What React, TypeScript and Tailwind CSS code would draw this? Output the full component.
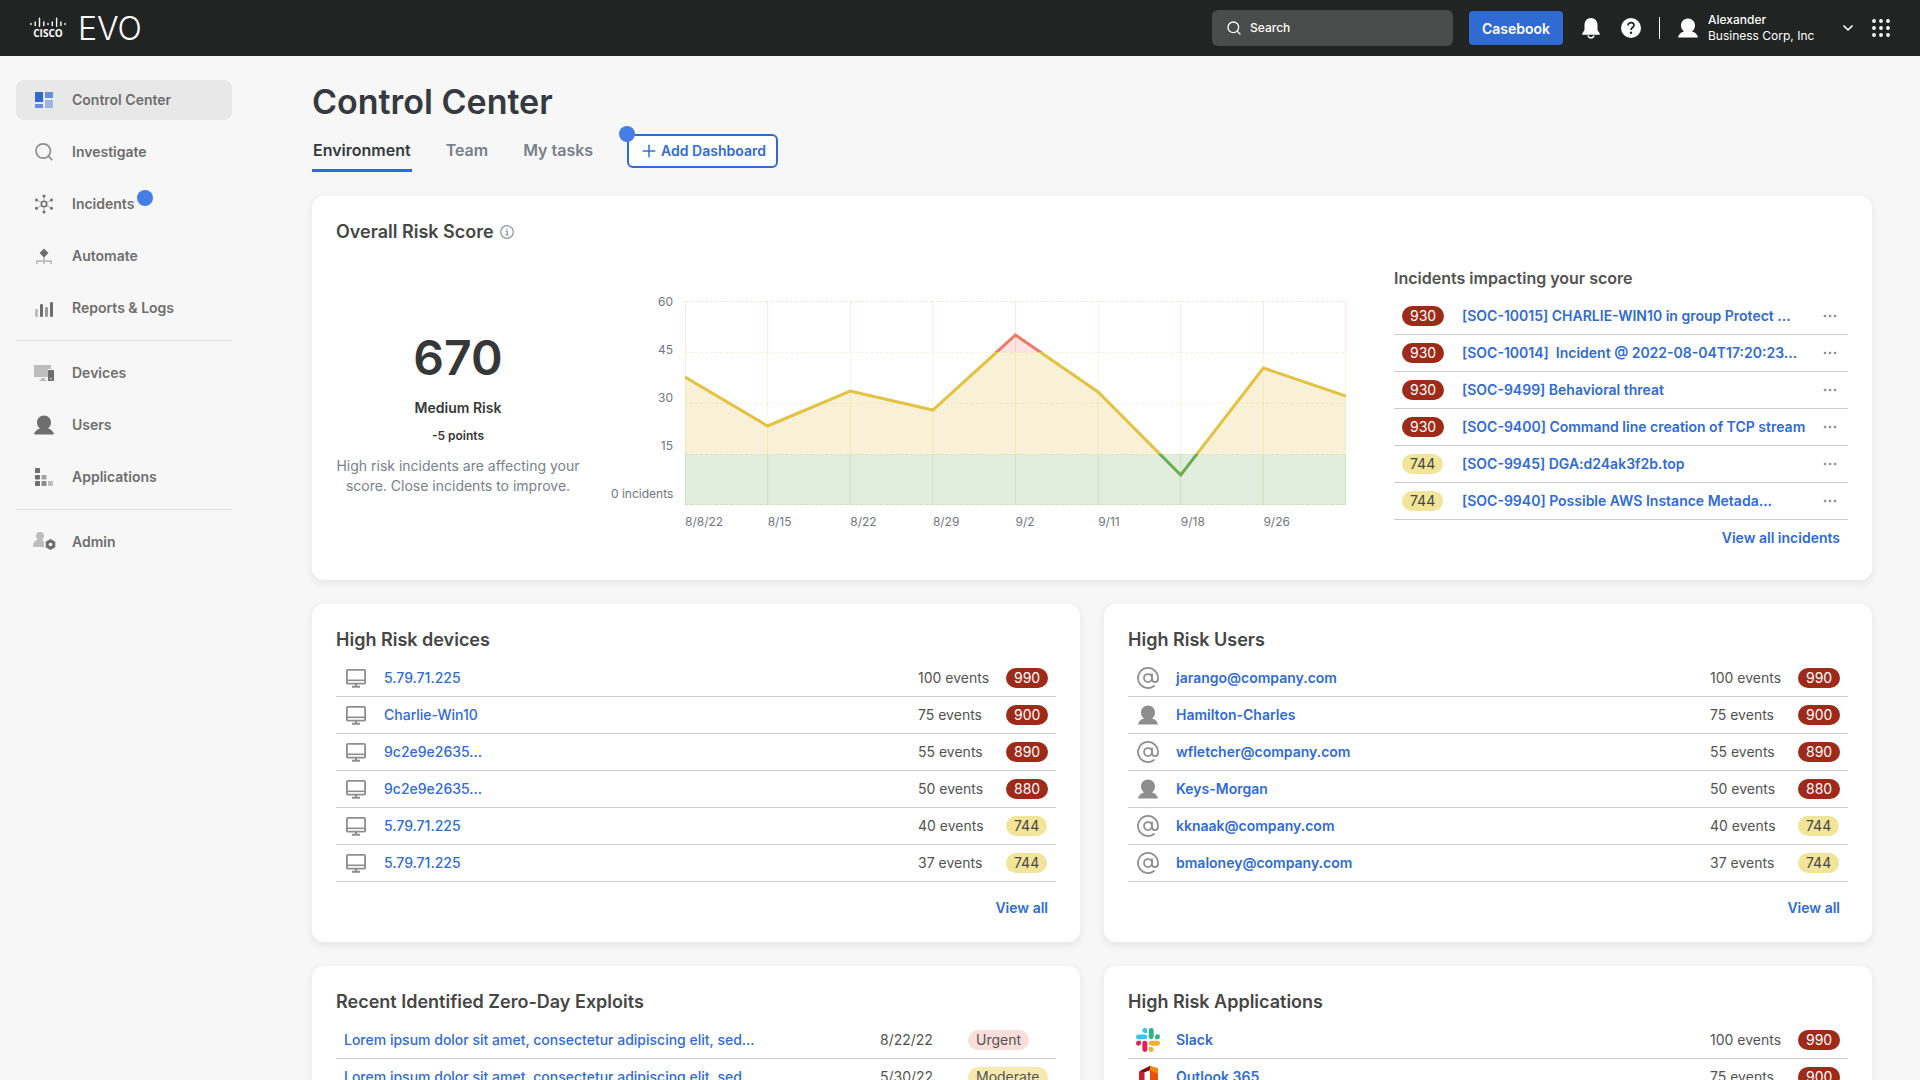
import type { ReactNode } from "react";
import { AtSign, ChevronDown, Plus, Search } from "lucide-react";

/* ---------- Icons ---------- */

const PersonIcon = ({ className }: { className?: string }) => (
  <svg className={className} viewBox="0 0 24 24" fill="currentColor" aria-hidden="true">
    <path d="M12 2.5c-4 0-7 3-7 7 0 2.600 1.200 4.600 3 6-3.200.8-5.600 3-6 6h20c-.4-3-2.800-5.200-6-6 1.800-1.400 3-3.400 3-6 0-4-3-7-7-7z" />
  </svg>
);

const MonitorIcon = () => (
  <svg className="size-6 text-[#8e8e8e]" viewBox="0 0 24 24" fill="none" stroke="currentColor" aria-hidden="true">
    <rect x="2.9" y="3.9" width="18.200" height="13.800" rx="1" strokeWidth="1.800" />
    <path d="M3 14.300h18" strokeWidth="1.600" />
    <path d="M12 18v3M8 20.800h8" strokeWidth="2" />
  </svg>
);

const SlackIcon = () => (
  <svg className="size-6" viewBox="0 0 24 24" aria-hidden="true">
    <g fill="#36c5f0">
      <path d="M8.800 0a2.400 2.400 0 0 0 0 4.900h2.400V2.400A2.400 2.400 0 0 0 8.800 0z" />
      <rect x="0" y="6.400" width="11.200" height="4.900" rx="2.400" />
    </g>
    <g fill="#2eb67d">
      <rect x="12.800" y="0" width="4.900" height="11.200" rx="2.400" />
      <path d="M24 8.800a2.400 2.400 0 0 0-4.900 0v2.400h2.500A2.400 2.400 0 0 0 24 8.800z" />
    </g>
    <g fill="#ecb22e">
      <rect x="12.800" y="12.800" width="11.200" height="4.900" rx="2.400" />
      <path d="M15.200 24a2.400 2.400 0 0 0 0-4.900h-2.400v2.500A2.400 2.400 0 0 0 15.200 24z" />
    </g>
    <g fill="#e01e5a">
      <path d="M0 15.200a2.400 2.400 0 0 0 4.900 0v-2.400H2.400A2.400 2.400 0 0 0 0 15.200z" />
      <rect x="6.400" y="12.800" width="4.900" height="11.200" rx="2.400" />
    </g>
  </svg>
);

const OfficeIcon = () => (
  <svg className="size-6" viewBox="0 0 24 24" aria-hidden="true">
    <path d="M14 1l8 2.500v17L14 23z" fill="#e8500e" />
    <path d="M14 1l8 2.500V9l-8-4z" fill="#f08a00" />
    <path d="M14 1v4L8.500 7v9L3 18.500V6.500z" fill="#c4202f" />
    <path d="M14 1v4.200L8 7.300 4 6z" fill="#7c0d10" />
    <path d="M3 18.500l11 1V23z" fill="#d63a2b" />
  </svg>
);

const AtIcon = () => <AtSign className="size-6 text-[#8e8e8e]" strokeWidth={1.75} />;
const UserRowIcon = () => <PersonIcon className="size-6 text-[#8e8e8e]" />;

const DashboardIcon = () => (
  <svg className="size-6" viewBox="0 0 24 24" fill="#2f6bd3" aria-hidden="true">
    <rect x="3" y="4" width="8" height="10" rx=".5" />
    <rect x="13" y="4" width="8" height="6" rx=".5" opacity=".7" />
    <rect x="3" y="16" width="8" height="4" rx=".5" opacity=".7" />
    <rect x="13" y="12" width="8" height="8" rx=".5" opacity=".4" />
  </svg>
);

const InvestigateIcon = () => (
  <svg className="size-6" viewBox="0 0 24 24" fill="none" stroke="#8e8e8e" strokeWidth="1.700" aria-hidden="true">
    <circle cx="11.200" cy="11" r="7.200" />
    <path d="M16.300 16.200l4 4" />
  </svg>
);

const IncidentsIcon = () => (
  <svg className="size-6" viewBox="0 0 24 24" aria-hidden="true">
    <path d="M12 4v5M12 15v5M4.500 8l5 2.500M19.500 8l-5 2.500M4.500 16l5-2.500M19.500 16l-5-2.500" stroke="#b8b8b8" strokeWidth="1.200" />
    <circle cx="12" cy="12" r="2.700" fill="none" stroke="#6e6e6e" strokeWidth="1.600" />
    <g fill="#6e6e6e">
      <circle cx="12" cy="4" r="1.500" />
      <circle cx="12" cy="20" r="1.500" />
      <circle cx="4.500" cy="8" r="1.500" />
      <circle cx="19.500" cy="8" r="1.500" />
      <circle cx="4.500" cy="16.300" r="1.500" />
      <circle cx="19.500" cy="16.300" r="1.500" />
    </g>
  </svg>
);

const AutomateIcon = () => (
  <svg className="size-6" viewBox="0 0 24 24" aria-hidden="true">
    <path d="M4.800 20v-2.800h14.400V20M12 12v8" fill="none" stroke="#bdbdbd" strokeWidth="1.700" />
    <rect x="8.800" y="5.800" width="6.400" height="6.400" rx=".8" transform="rotate(45 12 9)" fill="#6e6e6e" />
  </svg>
);

const ReportsIcon = () => (
  <svg className="size-6" viewBox="0 0 24 24" aria-hidden="true">
    <rect x="3" y="13" width="3" height="8" rx="1.200" fill="#bdbdbd" />
    <rect x="8" y="8" width="3" height="13" rx="1.200" fill="#6e6e6e" />
    <rect x="13" y="11" width="3" height="10" rx="1.200" fill="#9a9a9a" />
    <rect x="18" y="6" width="3" height="15" rx="1.200" fill="#6e6e6e" />
  </svg>
);

const DevicesIcon = () => (
  <svg className="size-6" viewBox="0 0 24 24" aria-hidden="true">
    <path d="M2 4h17v4h-3v8H2zM9 17h4v2h1.500v1h-7v-1H9z" fill="#bdbdbd" />
    <rect x="16" y="9" width="6" height="11" rx=".8" fill="#6e6e6e" />
    <circle cx="19" cy="17.700" r=".8" fill="#fff" />
  </svg>
);

const ApplicationsIcon = () => (
  <svg className="size-6" viewBox="0 0 24 24" aria-hidden="true">
    <g fill="#6e6e6e">
      <rect x="3" y="3" width="5" height="5" rx=".8" />
      <rect x="3" y="10" width="5" height="4.500" rx=".8" />
      <rect x="3" y="16" width="5" height="5" rx=".8" />
    </g>
    <rect x="9.500" y="10" width="5" height="4.500" rx=".8" fill="#a2a2a2" />
    <rect x="9.500" y="16" width="5" height="5" rx=".8" fill="#8c8c8c" />
    <rect x="16" y="16" width="5" height="5" rx=".8" fill="#bdbdbd" />
  </svg>
);

const AdminIcon = () => (
  <svg className="size-6 overflow-visible" viewBox="0 0 24 24" aria-hidden="true">
    <path d="M8 2a4 4 0 0 0-4 4c0 1.500.7 2.800 1.800 3.500C3 10.300 1 12.500 1 17h11v-5l-1.800-2.500C11.300 8.800 12 7.500 12 6a4 4 0 0 0-4-4z" fill="#bdbdbd" />
    <path d="M18.500 9l4.800 2.700v5.600L18.500 20l-4.800-2.700v-5.600z" fill="#6e6e6e" />
    <circle cx="18.500" cy="14.500" r="1.800" fill="#f7f7f7" />
  </svg>
);

/* ---------- Data ---------- */

const navGroups = [
  [
    { label: "Control Center", icon: <DashboardIcon />, active: true },
    { label: "Investigate", icon: <InvestigateIcon /> },
    { label: "Incidents", icon: <IncidentsIcon />, dot: true },
    { label: "Automate", icon: <AutomateIcon /> },
    { label: "Reports & Logs", icon: <ReportsIcon /> },
  ],
  [
    { label: "Devices", icon: <DevicesIcon /> },
    { label: "Users", icon: <PersonIcon className="size-6 text-[#6e6e6e]" /> },
    { label: "Applications", icon: <ApplicationsIcon /> },
  ],
  [{ label: "Admin", icon: <AdminIcon /> }],
];

const incidents = [
  { score: 930, name: "[SOC-10015] CHARLIE-WIN10 in group Protect ..." },
  { score: 930, name: "[SOC-10014]  Incident @ 2022-08-04T17:20:23..." },
  { score: 930, name: "[SOC-9499] Behavioral threat" },
  { score: 930, name: "[SOC-9400] Command line creation of TCP stream" },
  { score: 744, name: "[SOC-9945] DGA:d24ak3f2b.top" },
  { score: 744, name: "[SOC-9940] Possible AWS Instance Metada..." },
];

type RiskRow = { icon: ReactNode; name: string; events: number; score: number };

const devices: RiskRow[] = [
  { icon: <MonitorIcon />, name: "5.79.71.225", events: 100, score: 990 },
  { icon: <MonitorIcon />, name: "Charlie-Win10", events: 75, score: 900 },
  { icon: <MonitorIcon />, name: "9c2e9e2635...", events: 55, score: 890 },
  { icon: <MonitorIcon />, name: "9c2e9e2635...", events: 50, score: 880 },
  { icon: <MonitorIcon />, name: "5.79.71.225", events: 40, score: 744 },
  { icon: <MonitorIcon />, name: "5.79.71.225", events: 37, score: 744 },
];

const users: RiskRow[] = [
  { icon: <AtIcon />, name: "jarango@company.com", events: 100, score: 990 },
  { icon: <UserRowIcon />, name: "Hamilton-Charles", events: 75, score: 900 },
  { icon: <AtIcon />, name: "wfletcher@company.com", events: 55, score: 890 },
  { icon: <UserRowIcon />, name: "Keys-Morgan", events: 50, score: 880 },
  { icon: <AtIcon />, name: "kknaak@company.com", events: 40, score: 744 },
  { icon: <AtIcon />, name: "bmaloney@company.com", events: 37, score: 744 },
];

const applications: RiskRow[] = [
  { icon: <SlackIcon />, name: "Slack", events: 100, score: 990 },
  { icon: <OfficeIcon />, name: "Outlook 365", events: 75, score: 900 },
];

const exploits = [
  { name: "Lorem ipsum dolor sit amet, consectetur adipiscing elit, sed...", date: "8/22/22", level: "Urgent", color: "bg-[#fadedc]" },
  { name: "Lorem ipsum dolor sit amet, consectetur adipiscing elit, sed", date: "5/30/22", level: "Moderate", color: "bg-[#f6eab0]" },
];

/* ---------- Shared pieces ---------- */

function Card({ title, children }: { title: ReactNode; children: ReactNode }) {
  return (
    <section className="rounded-xl bg-white p-6 shadow-[0_3px_10px_rgba(0,0,0,0.08)]">
      <h2 className="flex items-center gap-1.5 text-[18px] leading-6 font-semibold text-[#464646]">{title}</h2>
      {children}
    </section>
  );
}

const tableClass = "mt-2 w-full table-fixed border-separate border-spacing-0 text-[14px] leading-5 text-[#525252]";
const rowClass = "h-[37px] [&>td]:border-b [&>td]:border-[#c9cbd1]";

function Score({ value }: { value: number }) {
  return (
    <span
      className={`block w-fit rounded-full px-2 ${
        value > 800 ? "bg-[#9e2a1a] text-white" : "bg-[#f2e498] text-[#464646]"
      }`}
    >
      {value}
    </span>
  );
}

function RiskTable({ rows, linkClass }: { rows: RiskRow[]; linkClass: string }) {
  return (
    <table className={tableClass}>
      <colgroup>
        <col className="w-10" />
        <col />
        <col className="w-22" />
        <col className="w-[58px]" />
      </colgroup>
      <tbody>
        {rows.map((row, i) => (
          <tr key={i} className={rowClass}>
            <td className="pl-2">{row.icon}</td>
            <td className="pl-2">
              <a href="#" className={linkClass}>
                {row.name}
              </a>
            </td>
            <td className="pl-2 whitespace-nowrap">{row.events} events</td>
            <td className="pl-2">
              <Score value={row.score} />
            </td>
          </tr>
        ))}
      </tbody>
    </table>
  );
}

function ViewAll() {
  return (
    <div className="mt-4 pr-2 text-right text-[14px] leading-5 font-semibold">
      <a href="#" className="text-[#2f6bd3]">
        View all
      </a>
    </div>
  );
}

/* ---------- Risk chart ---------- */

const xLabels = ["8/8/22", "8/15", "8/22", "8/29", "9/2", "9/11", "9/18", "9/26"];
const yLabels = ["60", "45", "30", "15", "0 incidents"];
const points = "0,76 82.5,125 165,90 247.5,109 330,34 412.5,91 495,174 577.5,67 660,95";

// The three risk bands, top to bottom
const bands = [
  { id: "high", y: 0, h: 51, line: "#e97b6c", fill: "#fbe3e1" },
  { id: "medium", y: 51, h: 102, line: "#e2c241", fill: "#f8f1d8" },
  { id: "low", y: 153, h: 51, line: "#6aae4f", fill: "#e1eedd" },
];

function RiskChart() {
  return (
    <div className="ml-[31px] flex min-w-0 flex-1 gap-3 text-[12px] leading-4 text-[#6f7580]">
      <div className="flex w-[62px] flex-col gap-8 pt-7 text-right whitespace-nowrap">
        {yLabels.map((label) => (
          <span key={label}>{label}</span>
        ))}
      </div>
      <div className="min-w-0 flex-1 pt-[35px]">
        <svg className="h-51 w-full" viewBox="0 0 660 204" preserveAspectRatio="none" role="img" aria-label="Risk score over time">
          {bands.map((band) => (
            <g key={band.id}>
              <clipPath id={band.id}>
                <rect x="0" y={band.y} width="660" height={band.h} />
              </clipPath>
              <g clipPath={`url(#${band.id})`}>
                {band.id === "low" ? (
                  <rect x="0" y={band.y} width="660" height={band.h} fill={band.fill} />
                ) : (
                  <polygon points={`0,204 ${points} 660,204`} fill={band.fill} />
                )}
                {[0.5, 82.5, 165, 247.5, 330, 412.5, 495, 577.5, 659.5].map((x) => (
                  <path key={x} d={`M${x} 0V204`} stroke={band.line} strokeOpacity=".18" />
                ))}
              </g>
            </g>
          ))}
          <g strokeOpacity=".2" strokeDasharray="3 2">
            <path d="M0 .5H660" stroke="#e97b6c" />
            <path d="M0 51.500H660M0 102.500H660M0 153.500H660" stroke="#e2c241" />
            <path d="M0 203.500H660" stroke="#6aae4f" />
          </g>
          {bands.map((band) => (
            <polyline
              key={band.id}
              points={points}
              fill="none"
              stroke={band.line}
              strokeWidth="3"
              clipPath={`url(#${band.id})`}
            />
          ))}
        </svg>
        <div className="mt-[9px] grid grid-cols-8">
          {xLabels.map((label) => (
            <span key={label}>{label}</span>
          ))}
        </div>
      </div>
    </div>
  );
}

/* ---------- Page sections ---------- */

function Header() {
  return (
    <header className="flex h-14 shrink-0 items-center bg-[#222423] px-7.5 text-white">
      <div className="flex w-9 flex-col items-center">
        <svg className="h-2.5 w-9" viewBox="0 0 36 10" stroke="#fff" strokeWidth="1.400" strokeLinecap="round" aria-hidden="true">
          <path d="M.9 6.500v1M5.200 5v3.500M9.500 1.200v8M13.800 5v3.500M18 6.500v1M22.300 5v3.500M26.600 1.200v8M30.900 5v3.500M35.100 6.500v1" />
        </svg>
        <span className="font-['Open_Sans',sans-serif] text-[10px] leading-3 font-bold">CISCO</span>
      </div>
      <span className="ml-3 pt-0.5 text-[32px] leading-10 font-light">EVO</span>

      <label className="ml-auto flex h-9 w-[241px] items-center gap-2 rounded-md bg-[#4a4c4b] px-3.5">
        <Search className="size-4" strokeWidth={2} />
        <input
          type="text"
          aria-label="Search"
          placeholder="Search"
          className="min-w-0 flex-1 bg-transparent text-[12px] font-medium placeholder:text-white focus:outline-none"
        />
      </label>
      <button type="button" className="ml-4 h-[34px] w-[94px] rounded bg-[#2f6bd3] text-[14px] font-semibold">
        Casebook
      </button>
      <button type="button" aria-label="Notifications" className="ml-4">
        <svg className="size-6" viewBox="0 0 24 24" fill="#fff" aria-hidden="true">
          <path d="M12 2c-4 0-6.500 3-6.500 7v5L3.300 17.500c-.3.700 0 1.300.7 1.300h16c.7 0 1-.6.700-1.300L18.500 14V9c0-4-2.500-7-6.500-7z" />
          <path d="M9 19.500c.3 1.500 1.500 2.300 3 2.300s2.700-.8 3-2.300" fill="none" stroke="#fff" strokeWidth="1.300" />
        </svg>
      </button>
      <button type="button" aria-label="Help" className="ml-4">
        <svg className="size-6" viewBox="0 0 24 24" aria-hidden="true">
          <circle cx="12" cy="12" r="10" fill="#fff" />
          <path d="M9 9.500C9 7.700 10.300 6.600 12 6.600s3 1.100 3 2.700c0 2.200-3 2.300-3 4.700" fill="none" stroke="#222423" strokeWidth="1.700" />
          <circle cx="12" cy="16.800" r="1.200" fill="#222423" />
        </svg>
      </button>
      <div className="ml-4 h-[22px] w-px bg-white" />
      <button type="button" className="ml-4 flex items-center text-left text-[12px] leading-4">
        <PersonIcon className="size-6" />
        <span className="ml-2 w-32">
          <span className="block font-medium">Alexander</span>
          <span className="block">Business Corp, Inc</span>
        </span>
        <ChevronDown className="ml-1 size-4" strokeWidth={2.5} />
      </button>
      <button type="button" aria-label="Apps" className="ml-4">
        <svg className="size-[18px]" viewBox="0 0 18 18" fill="#fff" aria-hidden="true">
          {[2, 9, 16].map((y) => [2, 9, 16].map((x) => <circle key={`${x}-${y}`} cx={x} cy={y} r="1.900" />))}
        </svg>
      </button>
    </header>
  );
}

function Sidebar() {
  return (
    <nav className="flex w-58 shrink-0 flex-col gap-3 py-6 pl-4 text-[14px] leading-5 font-semibold text-[#6e6e6e]">
      {navGroups.map((group, g) => (
        <div key={g} className="contents">
          {g > 0 && <hr className="border-[#dedede]" />}
          {group.map((item) => (
            <a
              key={item.label}
              href="#"
              className={`flex h-10 items-center gap-4 rounded-lg px-4 ${item.active ? "bg-[#e8e8e8]" : ""}`}
            >
              {item.icon}
              <span className="relative">
                {item.label}
                {item.dot && <span className="absolute -top-1 left-full ml-[3px] size-4 rounded-full bg-[#457fe6]" />}
              </span>
            </a>
          ))}
        </div>
      ))}
    </nav>
  );
}

function Tabs() {
  return (
    <div className="mt-2.5 mb-6 flex items-end gap-[33px] text-[16px] leading-6 font-semibold">
      <button type="button" className="border-b-3 border-[#2f6bd3] px-px pb-[7px] text-[#343a40]">
        Environment
      </button>
      <button type="button" className="border-b-3 border-transparent px-px pb-[7px] text-[#78808a]">
        Team
      </button>
      <button type="button" className="border-b-3 border-transparent px-px pb-[7px] text-[#78808a]">
        My tasks
      </button>
      <button
        type="button"
        className="relative mb-1 flex h-[34px] items-center gap-0.5 rounded-md border-2 border-[#2f6bd3] bg-white px-2.5 text-[14px] leading-5 text-[#2f6bd3]"
      >
        <span className="absolute -top-2.5 -left-2.5 size-4 rounded-full bg-[#457fe6]" />
        <Plus className="size-5" strokeWidth={1.75} />
        Add Dashboard
      </button>
    </div>
  );
}

function RiskScore() {
  return (
    <Card
      title={
        <>
          Overall Risk Score
          <svg className="size-3.5" viewBox="0 0 14 14" fill="none" stroke="#8b93a0" aria-hidden="true">
            <circle cx="7" cy="7" r="6.300" strokeWidth="1.200" />
            <path d="M5.700 6.300h1.500v3.500M5.500 10h3.200M7 3.300v1.400" strokeWidth="1.200" />
          </svg>
        </>
      }
    >
      <div className="mt-[22px] mb-2 flex">
        <div className="w-61 shrink-0 pt-17 text-center text-[#363737]">
          <p className="text-[48px] leading-12 font-semibold">670</p>
          <p className="mt-4 text-[14px] leading-5 font-semibold">Medium Risk</p>
          <p className="mt-2.5 text-[12px] leading-4 font-semibold">-5 points</p>
          <p className="mt-3 text-[14px] leading-5 whitespace-nowrap text-[#78808a]">
            High risk incidents are affecting your
            <br />
            score. Close incidents to improve.
          </p>
        </div>

        <RiskChart />

        <div className="ml-12 w-[454px] shrink-0">
          <h3 className="text-[16px] leading-6 font-semibold text-[#525252]">Incidents impacting your score</h3>
          <table className={tableClass}>
            <colgroup>
              <col className="w-15" />
              <col />
              <col className="w-9" />
            </colgroup>
            <tbody>
              {incidents.map((incident) => (
                <tr key={incident.name} className={rowClass}>
                  <td className="pl-2">
                    <Score value={incident.score} />
                  </td>
                  <td className="pl-2 font-semibold">
                    <a href="#" className="whitespace-pre text-[#2f6bd3]">
                      {incident.name}
                    </a>
                  </td>
                  <td className="pl-2">
                    <button type="button" aria-label="More actions" className="block">
                      <svg className="size-5" viewBox="0 0 20 20" fill="#8e8e8e" aria-hidden="true">
                        <circle cx="5" cy="10" r="1.300" />
                        <circle cx="10" cy="10" r="1.300" />
                        <circle cx="15" cy="10" r="1.300" />
                      </svg>
                    </button>
                  </td>
                </tr>
              ))}
            </tbody>
          </table>
          <div className="mt-2 pr-2 text-right text-[14px] leading-5 font-semibold">
            <a href="#" className="text-[#2f6bd3]">
              View all incidents
            </a>
          </div>
        </div>
      </div>
    </Card>
  );
}

export default function App() {
  return (
    <div className="flex h-screen flex-col overflow-hidden bg-[#f7f7f7] font-[Inter,sans-serif]">
      <Header />
      <div className="flex min-h-0 flex-1">
        <Sidebar />
        <main className="min-w-0 flex-1 overflow-y-auto py-6 pr-12 pl-20 [scrollbar-width:none]">
          <h1 className="text-[34px] leading-11 font-semibold text-[#343a40]">Control Center</h1>
          <Tabs />
          <RiskScore />

          <div className="mt-6 grid grid-cols-2 gap-6">
            <Card title="High Risk devices">
              <RiskTable rows={devices} linkClass="font-medium text-[#2f6bd3]" />
              <ViewAll />
            </Card>
            <Card title="High Risk Users">
              <RiskTable rows={users} linkClass="font-semibold text-[#2f6bd3]" />
              <ViewAll />
            </Card>
            <Card title="Recent Identified Zero-Day Exploits">
              <table className={tableClass}>
                <colgroup>
                  <col />
                  <col className="w-22" />
                  <col className="w-24" />
                </colgroup>
                <tbody>
                  {exploits.map((exploit) => (
                    <tr key={exploit.date} className={rowClass}>
                      <td className="pl-2 font-medium">
                        <a href="#" className="text-[#2f6bd3]">
                          {exploit.name}
                        </a>
                      </td>
                      <td className="pl-2">{exploit.date}</td>
                      <td className="pl-2">
                        <span className={`block w-fit rounded-full px-2 ${exploit.color}`}>{exploit.level}</span>
                      </td>
                    </tr>
                  ))}
                </tbody>
              </table>
            </Card>
            <Card title="High Risk Applications">
              <RiskTable rows={applications} linkClass="font-semibold text-[#2f6bd3]" />
            </Card>
          </div>
        </main>
      </div>
    </div>
  );
}
